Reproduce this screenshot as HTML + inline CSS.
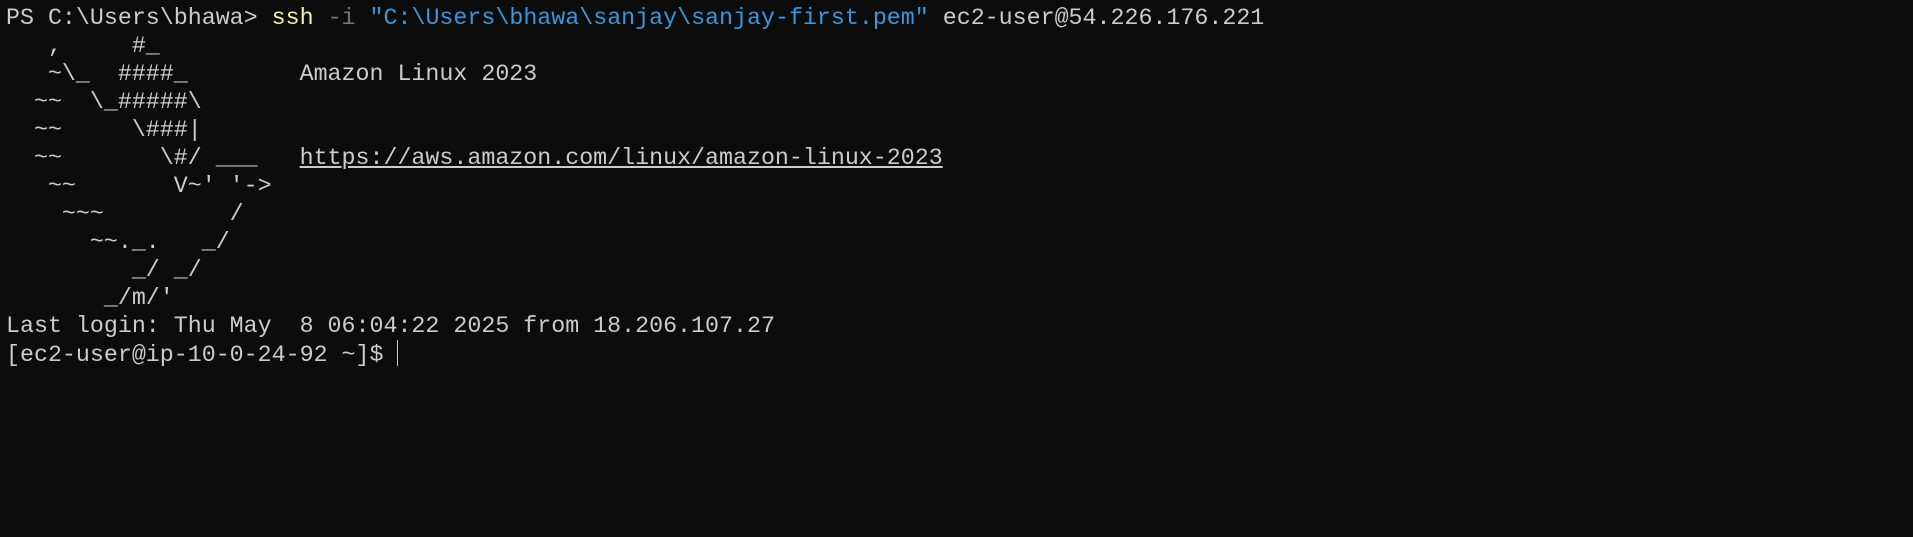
<!DOCTYPE html>
<html><head><meta charset="utf-8">
<style>
html,body{margin:0;padding:0;background:#0c0c0c;width:1913px;height:537px;overflow:hidden}
pre{margin:0;position:absolute;left:6px;top:4px;font-family:"Liberation Mono",monospace;font-size:23.3px;line-height:28px;color:#cccccc;white-space:pre}
.y{color:#f9f1a5}.g{color:#767676}.b{color:#3a96dd}
.u{text-decoration:underline}
.cur{display:inline-block;width:1px;height:26px;background:#cccccc;vertical-align:-5px}
</style></head><body>
<pre>PS C:\Users\bhawa&gt; <span class="y">ssh</span> <span class="g">-i</span> <span class="b">"C:\Users\bhawa\sanjay\sanjay-first.pem"</span> ec2-user@54.226.176.221
   ,     #_
   ~\_  ####_        Amazon Linux 2023
  ~~  \_#####\
  ~~     \###|
  ~~       \#/ ___   <span class="u">https://aws.amazon.com/linux/amazon-linux-2023</span>
   ~~       V~' '-&gt;
    ~~~         /
      ~~._.   _/
         _/ _/
       _/m/'
Last login: Thu May  8 06:04:22 2025 from 18.206.107.27
[ec2-user@ip-10-0-24-92 ~]$ <span class="cur"></span></pre>
</body></html>
